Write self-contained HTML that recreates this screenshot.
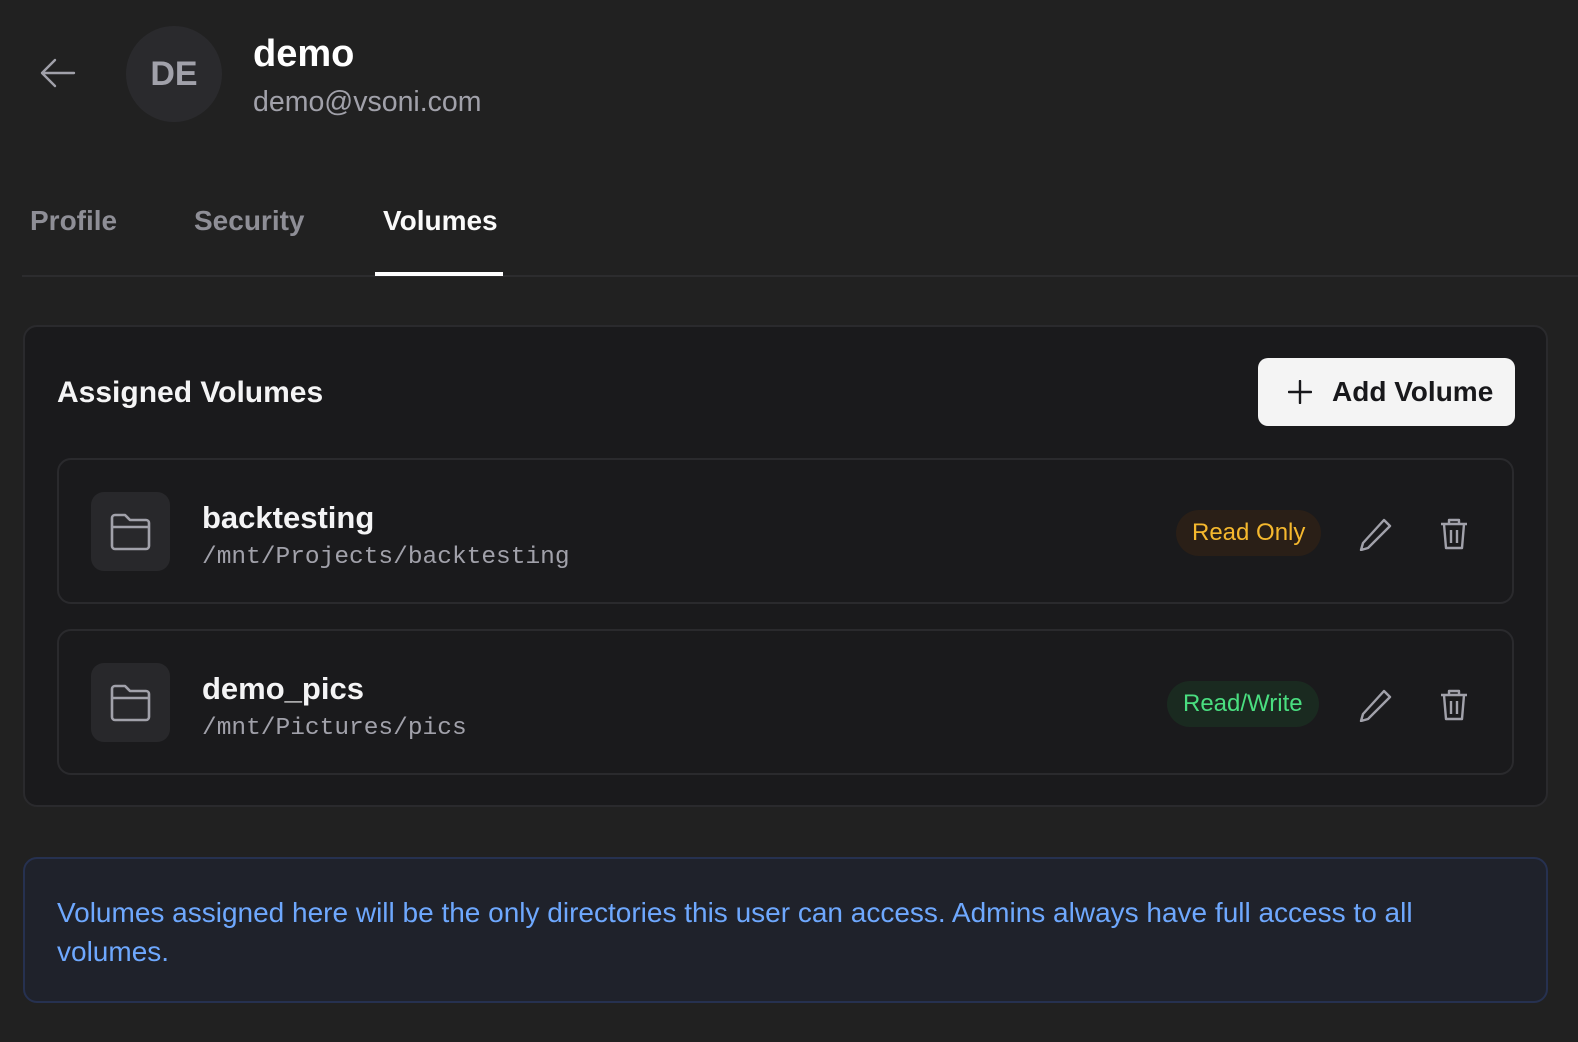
<!DOCTYPE html>
<html><head><meta charset="utf-8"><style>
*{box-sizing:border-box;margin:0;padding:0}
body{width:1578px;height:1042px;background:#212121;font-family:"Liberation Sans",sans-serif;position:relative;overflow:hidden;color:#fff}
.abs{position:absolute}
.row{position:absolute;left:57px;width:1457px;height:146px;border:2px solid #2a2a2d;border-radius:14px}
.ib{position:absolute;left:32px;top:32px;width:79px;height:79px;background:#28282b;border-radius:13px;display:flex;align-items:center;justify-content:center}
.nm{position:absolute;left:143px;top:40px;font-size:31px;font-weight:bold;color:#f4f4f5}
.pt{position:absolute;left:143px;top:84px;font-family:"Liberation Mono",monospace;font-size:24.5px;color:#a1a1aa}
.bd{position:absolute;top:50px;height:46px;border-radius:23px;font-size:24px;line-height:46px;padding:0 16px}
.ic{position:absolute;top:57px}
</style></head><body>
<svg class="abs" style="left:38px;top:55px" width="40" height="36" viewBox="0 0 40 36"><path d="M36 18H4M17 5L4 18l13 13" fill="none" stroke="#a1a1aa" stroke-width="2.4" stroke-linecap="round" stroke-linejoin="round"/></svg>
<div class="abs" style="left:126px;top:26px;width:96px;height:96px;border-radius:50%;background:#2a2a2d;color:#a1a1aa;font-size:34px;font-weight:bold;text-align:center;line-height:96px">DE</div>
<div class="abs" style="left:253px;top:33px;font-size:38px;font-weight:bold">demo</div>
<div class="abs" style="left:253px;top:86px;font-size:28.5px;color:#a1a1aa">demo@vsoni.com</div>
<div class="abs" style="left:30px;top:205px;font-size:28px;font-weight:bold;color:#8e8e96">Profile</div>
<div class="abs" style="left:194px;top:205px;font-size:28px;font-weight:bold;color:#8e8e96">Security</div>
<div class="abs" style="left:383px;top:205px;font-size:28px;font-weight:bold;color:#fafafa">Volumes</div>
<div class="abs" style="left:22px;top:275px;width:1556px;height:2px;background:#2c2c2e"></div>
<div class="abs" style="left:375px;top:272px;width:128px;height:4px;background:#fff"></div>
<div class="abs" style="left:23px;top:325px;width:1525px;height:482px;background:#1a1a1c;border:2px solid #2a2a2d;border-radius:14px">
<div class="abs" style="left:32px;top:49px;font-size:30px;font-weight:bold;color:#f4f4f5">Assigned Volumes</div>
<div class="abs" style="left:1233px;top:31px;width:257px;height:68px;background:#f4f4f4;border-radius:10px;color:#18181b;font-size:28px;font-weight:bold;line-height:68px">
<svg class="abs" style="left:30px;top:22px" width="24" height="24" viewBox="0 0 24 24"><path d="M12 1v22M1 12h22" stroke="#18181b" stroke-width="2.4" stroke-linecap="round"/></svg>
<span class="abs" style="left:74px">Add Volume</span></div>
</div>
<div class="row" style="top:458px;background:#1a1a1c">
<div class="ib"><svg width="44" height="40" viewBox="0 0 44 40"><path d="M3 6a3 3 0 0 1 3-3h10l5 5h16a3 3 0 0 1 3 3v23a3 3 0 0 1-3 3H6a3 3 0 0 1-3-3z M3 15h37" fill="none" stroke="#a1a1aa" stroke-width="2.6" stroke-linejoin="round"/></svg></div>
<div class="nm">backtesting</div><div class="pt">/mnt/Projects/backtesting</div>
<div class="bd" style="left:1117px;background:#2a1f17;color:#f5b82e">Read Only</div>
<svg class="ic" style="left:1300px" width="34" height="34" viewBox="0 0 34 34"><path d="M25 3l6 6L9 31l-7 2 2-7z" fill="none" stroke="#a1a1aa" stroke-width="2.4" stroke-linejoin="round"/></svg>
<svg class="ic" style="left:1380px" width="30" height="34" viewBox="0 0 30 34"><path d="M2 7h26M10 7V3h10v4M5 7l2 24h16l2-24M12 13v13M18 13v13" fill="none" stroke="#a1a1aa" stroke-width="2.4" stroke-linejoin="round"/></svg>
</div>
<div class="row" style="top:629px;background:#1a1a1c">
<div class="ib"><svg width="44" height="40" viewBox="0 0 44 40"><path d="M3 6a3 3 0 0 1 3-3h10l5 5h16a3 3 0 0 1 3 3v23a3 3 0 0 1-3 3H6a3 3 0 0 1-3-3z M3 15h37" fill="none" stroke="#a1a1aa" stroke-width="2.6" stroke-linejoin="round"/></svg></div>
<div class="nm">demo_pics</div><div class="pt">/mnt/Pictures/pics</div>
<div class="bd" style="left:1108px;background:#1a2a20;color:#4ade80">Read/Write</div>
<svg class="ic" style="left:1300px" width="34" height="34" viewBox="0 0 34 34"><path d="M25 3l6 6L9 31l-7 2 2-7z" fill="none" stroke="#a1a1aa" stroke-width="2.4" stroke-linejoin="round"/></svg>
<svg class="ic" style="left:1380px" width="30" height="34" viewBox="0 0 30 34"><path d="M2 7h26M10 7V3h10v4M5 7l2 24h16l2-24M12 13v13M18 13v13" fill="none" stroke="#a1a1aa" stroke-width="2.4" stroke-linejoin="round"/></svg>
</div>
<div class="abs" style="left:23px;top:857px;width:1525px;height:146px;background:#1f222b;border:2px solid #263150;border-radius:14px;padding:34px 60px 0 32px;color:#6ea8fe;font-size:28px;line-height:39px"><span style="display:block;width:1400px">Volumes assigned here will be the only directories this user can access. Admins always have full access to all volumes.</span></div>
</body></html>
